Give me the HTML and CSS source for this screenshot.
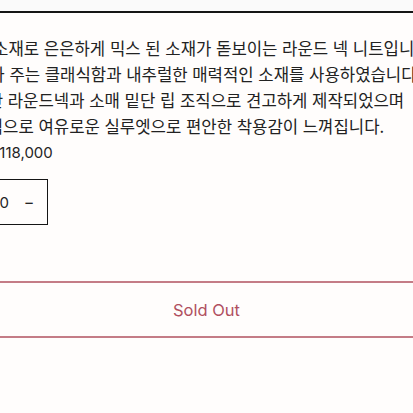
FILE: index.html
```html
<!DOCTYPE html>
<html lang="ko">
<head>
    <meta charset="UTF-8">
    <meta name="viewport" content="width=device-width, initial-scale=1.0">
    <title>라운드 넥 니트</title>
    <link rel="stylesheet" href="styles.css">
</head>
<body>
    <div class="top-bar"></div>

    <div class="product">
        <div class="description">
            <p class="line line-1">부드러운 소재로 은은하게 믹스 된 소재가 돋보이는 라운드 넥 니트입니다.</p>
            <p class="line line-2">잡아 주는 클래식함과 내추럴한 매력적인 소재를 사용하였습니다.</p>
            <p class="line line-3">탄탄한 라운드넥과 소매 밑단 립 조직으로 견고하게 제작되었으며</p>
            <p class="line line-4">전체적으로 여유로운 실루엣으로 편안한 착용감이 느껴집니다.</p>
        </div>

        <div class="price">₩118,000</div>

        <div class="quantity">
            <span class="qty-value">0</span>
            <button class="qty-btn">−</button>
        </div>

        <button class="sold-out" disabled>Sold Out</button>
    </div>
</body>
</html>
```

FILE: styles.css
```css
:root {
    --bg: #fffdfc;
    --text: #242424;
    --line: #151515;
    --sold: #b0505f;
    --sold-border: #c47c86;
}

* {
    margin: 0;
    padding: 0;
    box-sizing: border-box;
}

body {
    background: var(--bg);
    color: var(--text);
    font-family: Inter, 'Noto Sans CJK KR', sans-serif;
    overflow: hidden;
}

.top-bar {
    height: 13px;
    background: #fafafa;
    border-bottom: 2px solid var(--line);
}

.product {
    padding-top: 22px;
}

.description {
    font-family: 'Noto Sans CJK KR', sans-serif;
    font-size: 16.7px;
    line-height: 26px;
    color: #222;
    white-space: nowrap;
}

/* lines are cropped on the left in the shot */
.line-1 { margin-left: -73px; }
.line-2 { margin-left: -26px; }
.line-3 { margin-left: -43px; }
.line-4 { margin-left: -43px; }

.price {
    margin-top: 4px;
    margin-left: -15px;
    font-size: 15px;
    line-height: 20px;
}

.quantity {
    margin-top: 16px;
    margin-left: -60px;
    width: 108px;
    height: 46px;
    border: 1px solid var(--line);
    display: flex;
    align-items: center;
    justify-content: flex-end;
    gap: 13px;
    padding-right: 11px;
    font-size: 15px;
}

.qty-btn {
    background: none;
    border: none;
    font-size: 16px;
    color: var(--text);
    font-family: inherit;
    width: 14px;
}

.sold-out {
    display: block;
    margin-top: 56px;
    margin-left: -20px;
    width: calc(100% + 40px);
    height: 57px;
    background: none;
    border: 2px solid var(--sold-border);
    color: var(--sold);
    font-family: Inter, sans-serif;
    font-size: 16.5px;
}
```
